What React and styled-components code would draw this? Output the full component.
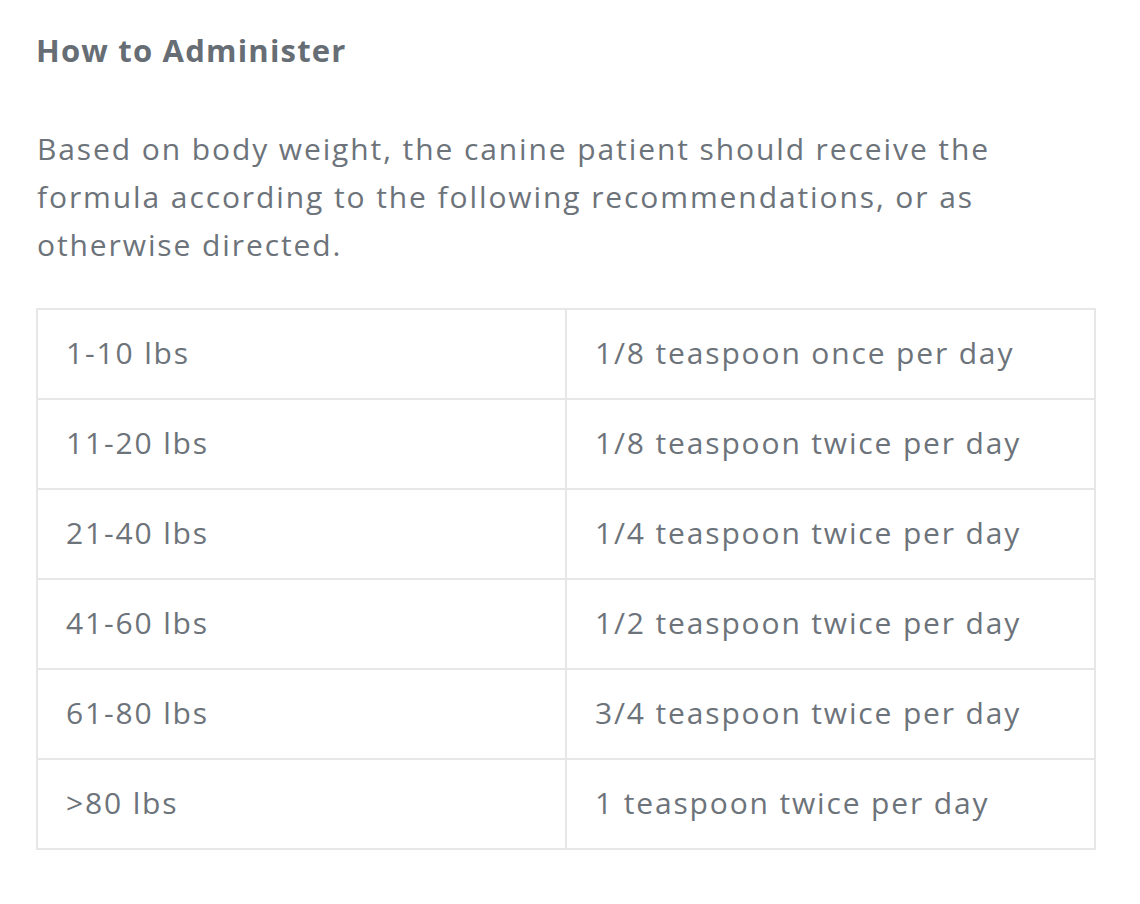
import React from "react";
import styled, { createGlobalStyle } from "styled-components";

const GlobalStyle = createGlobalStyle`
  html, body { margin: 0; padding: 0; background: #ffffff; }
  body { font-family: "Open Sans", "Noto Sans", sans-serif; color: #6b7178; }
`;

const Section = styled.section`
  padding: 30px 44px 40px 36px;
  width: 1060px;
`;

const Heading = styled.h3`
  margin: 0;
  font-size: 31px;
  line-height: 40px;
  font-weight: 700;
  letter-spacing: 1.2px;
  color: #676d74;
`;

const Paragraph = styled.p`
  margin: 55px 0 39px 1px;
  font-size: 30px;
  line-height: 48px;
  font-weight: 400;
  letter-spacing: 1.9px;
  color: #6d737a;
`;

const Table = styled.table`
  width: 1060px;
  border-collapse: collapse;
  table-layout: fixed;
`;

const Cell = styled.td`
  border: 2px solid #e7e7e7;
  padding: 19px 28px 21px;
  font-size: 30px;
  line-height: 48px;
  letter-spacing: 1.85px;
  color: #6d737a;
  width: 50%;
`;

const rows = [
  ["1-10 lbs", "1/8 teaspoon once per day"],
  ["11-20 lbs", "1/8 teaspoon twice per day"],
  ["21-40 lbs", "1/4 teaspoon twice per day"],
  ["41-60 lbs", "1/2 teaspoon twice per day"],
  ["61-80 lbs", "3/4 teaspoon twice per day"],
  [">80 lbs", "1 teaspoon twice per day"],
];

export default function App() {
  return (
    <>
      <GlobalStyle />
      <Section>
        <Heading>How to Administer</Heading>
        <Paragraph>
          Based on body weight, the canine patient should receive the formula according to the following recommendations, or as otherwise directed.
        </Paragraph>
        <Table>
          <tbody>
            {rows.map(([w, d]) => (
              <tr key={w}>
                <Cell>{w}</Cell>
                <Cell>{d}</Cell>
              </tr>
            ))}
          </tbody>
        </Table>
      </Section>
    </>
  );
}
